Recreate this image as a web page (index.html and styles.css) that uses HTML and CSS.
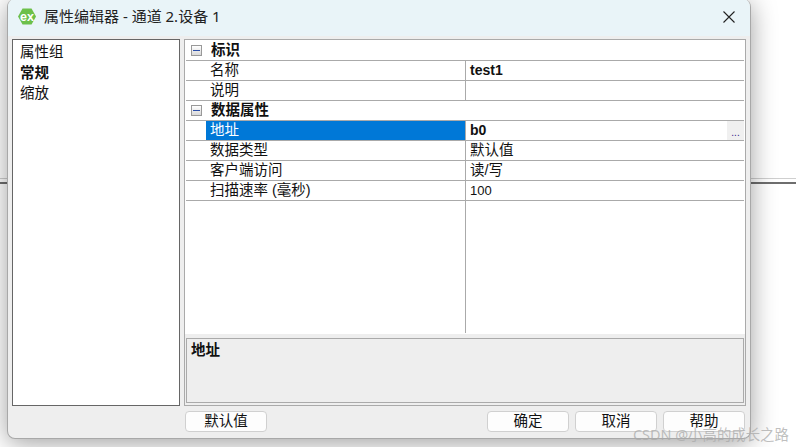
FILE: index.html
```html
<!DOCTYPE html>
<html lang="zh">
<head>
<meta charset="utf-8">
<title>属性编辑器</title>
<link rel="stylesheet" href="styles.css">
</head>
<body>
<div class="desktop">
  <div class="dialog">
    <header class="titlebar">
      <svg class="logo" viewBox="0 0 18 17" width="18" height="17">
        <polygon points="4.5,0.5 13.5,0.5 18,8.5 13.5,16.5 4.5,16.5 0,8.5" fill="#6cc04a"/>
        <text x="9" y="12.5" text-anchor="middle" class="logo-text">ex</text>
      </svg>
      <span class="title">属性编辑器 - 通道 2.设备 1</span>
      <svg class="close" viewBox="0 0 12 12" width="12" height="12">
        <path d="M0.5 0.5L11.5 11.5M11.5 0.5L0.5 11.5" stroke="#222" stroke-width="1.1" fill="none"/>
      </svg>
    </header>
    <div class="body">
      <div class="main">
        <ul class="groups">
          <li class="first">属性组</li>
          <li class="strong">常规</li>
          <li>缩放</li>
        </ul>
        <div class="panel">
          <div class="grid">
            <div class="group"><span class="toggle"></span><b>标识</b></div>
            <div class="row"><div class="key">名称</div><div class="val strong">test1</div></div>
            <div class="row"><div class="key">说明</div><div class="val"></div></div>
            <div class="group"><span class="toggle"></span><b>数据属性</b></div>
            <div class="row"><div class="key selected">地址</div><div class="val strong">b0<span class="more">...</span></div></div>
            <div class="row"><div class="key">数据类型</div><div class="val cjk">默认值</div></div>
            <div class="row"><div class="key">客户端访问</div><div class="val cjk">读/写</div></div>
            <div class="row"><div class="key">扫描速率 (毫秒)</div><div class="val">100</div></div>
            <div class="filler"></div>
          </div>
          <div class="desc"><b>地址</b></div>
        </div>
      </div>
      <div class="actions">
        <button class="btn">默认值</button>
        <span class="spacer"></span>
        <button class="btn">确定</button>
        <button class="btn">取消</button>
        <button class="btn">帮助</button>
      </div>
    </div>
  </div>
  <div class="watermark">CSDN @小高的成长之路</div>
</div>
</body>
</html>
```
FILE: styles.css
```css
* { box-sizing: border-box; }
html, body { margin: 0; padding: 0; }
body {
  width: 796px;
  height: 447px;
  overflow: hidden;
  font-family: "Liberation Sans", "Noto Sans CJK SC", sans-serif;
  font-size: 14px;
  color: #111;
}
.desktop {
  position: relative;
  width: 796px;
  height: 447px;
  background:
    linear-gradient(#cfcfcf, #cfcfcf) 0 178px / 100% 1px no-repeat,
    linear-gradient(#6e6e6e, #6e6e6e) 0 182px / 100% 2px no-repeat,
    #fff;
}
.dialog {
  position: absolute;
  left: 7px;
  top: -1px;
  width: 744px;
  height: 440px;
  background: #eee;
  border: 1px solid #a8a8a8;
  border-top: 0;
  border-radius: 8px;
  box-shadow: 0 4px 26px rgba(0, 0, 0, .38);
  display: flex;
  flex-direction: column;
  overflow: hidden;
}
.titlebar {
  height: 37px;
  flex: none;
  background: #e9f4f8;
  display: flex;
  align-items: center;
  padding: 0 15px 2px 10px;
}
.logo { flex: none; margin-right: 8px; }
.logo-text { font: 700 12.5px "Liberation Sans", sans-serif; fill: #fff; }
.title { flex: 1; font-family: "Noto Sans", "Noto Sans CJK SC", sans-serif; font-size: 15px; color: #222; position: relative; top: -1px; }
.close { flex: none; }
.body {
  flex: 1;
  display: flex;
  flex-direction: column;
  padding: 3px 4px 5px 4px;
  min-height: 0;
}
.main { display: flex; gap: 4px; height: 367px; flex: none; }
.groups {
  width: 168px;
  flex: none;
  margin: 0;
  padding: 2px 0 0 7px;
  list-style: none;
  background: #fff;
  border: 1px solid #666;
}
.groups li { height: 20px; line-height: 20px; font-size: 14.5px; }
.groups .first { height: 21px; }
.strong { font-weight: 700; }
.panel {
  flex: 1;
  display: flex;
  flex-direction: column;
  border: 1px solid #aaa;
  padding: 0 1px 2px;
}
.grid {
  flex: 1;
  background: #fff;
  display: flex;
  flex-direction: column;
  margin: 0 -1px;
  padding: 1px 1px 0;
  min-height: 0;
}
.group, .row {
  height: 20px;
  flex: none;
  border-bottom: 1px solid #aaa;
  line-height: 19px;
}
.group { display: flex; align-items: center; padding-left: 5px; font-size: 14.5px; }
.group b { margin-left: 9px; }
.toggle {
  width: 11px;
  height: 11px;
  flex: none;
  position: relative;
  border: 1px solid #999;
  background: linear-gradient(#fff, #d8d8d8);
}
.toggle::after {
  content: "";
  position: absolute;
  left: 1px;
  right: 1px;
  top: 4px;
  height: 1px;
  background: #2b4fa8;
}
.row { display: grid; grid-template-columns: 280px 1fr; }
.key {
  margin-left: 20px;
  padding-left: 4px;
  border-right: 1px solid #aaa;
  font-size: 14.5px;
}
.val {
  position: relative;
  padding-left: 4px;
  font-size: 13px;
}
.val.strong { font-size: 14px; }
.val.cjk { font-size: 14.5px; }
.selected { background: #0078d7; color: #fff; }
.more {
  position: absolute;
  right: 0;
  top: 0;
  width: 17px;
  height: 19px;
  background: #f0f0f0;
  color: #30208a;
  font: 400 10px/24px "Liberation Sans", sans-serif;
  text-align: center;
}
.filler {
  flex: 1;
  margin-left: 279px;
  margin-bottom: 1px;
  border-left: 1px solid #aaa;
}
.desc {
  height: 65px;
  flex: none;
  margin-top: 4px;
  padding: 2px 4px;
  border: 1px solid #aaa;
  background: #eee;
  font-size: 14.5px;
  line-height: 18px;
}
.actions {
  display: flex;
  gap: 6px;
  margin-top: 5px;
  padding-left: 173px;
  padding-right: 1px;
}
.spacer { flex: 1; }
.btn {
  width: 82px;
  height: 21px;
  padding: 0;
  font-family: "Liberation Sans", "Noto Sans CJK SC", sans-serif;
  font-size: 14.5px;
  line-height: 19px;
  color: #111;
  background: #fdfdfd;
  border: 1px solid #d0d0d0;
  border-radius: 4px;
}
.watermark {
  position: absolute;
  left: 633px;
  top: 423px;
  font-family: "Noto Sans", "Noto Sans CJK SC", sans-serif;
  font-size: 14.4px;
  color: rgba(170, 170, 170, .75);
  white-space: nowrap;
}
```
